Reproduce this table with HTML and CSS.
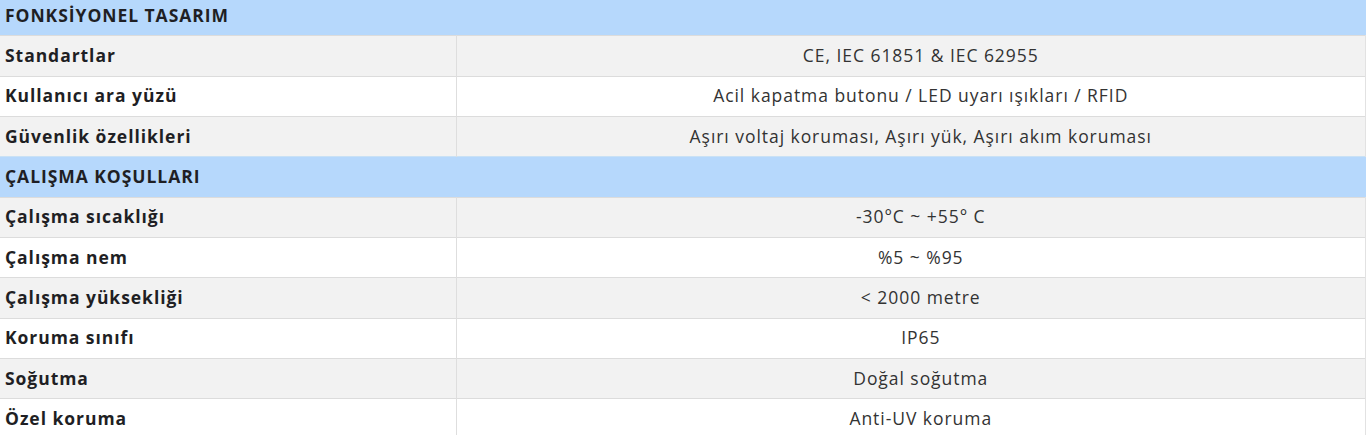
FILE: index.html
```html
<!DOCTYPE html>
<html lang="tr">
<head>
<meta charset="utf-8">
<link rel="stylesheet" href="styles.css">
</head>
<body>
<table class="spec">
  <colgroup>
    <col class="col-label">
    <col class="col-value">
  </colgroup>
  <tbody>
    <tr class="section"><td colspan="2">FONKSİYONEL TASARIM</td></tr>
    <tr class="odd"><td class="label">Standartlar</td><td class="value">CE, IEC 61851 &amp; IEC 62955</td></tr>
    <tr class="even"><td class="label">Kullanıcı ara yüzü</td><td class="value">Acil kapatma butonu / LED uyarı ışıkları / RFID</td></tr>
    <tr class="odd"><td class="label">Güvenlik özellikleri</td><td class="value">Aşırı voltaj koruması, Aşırı yük, Aşırı akım koruması</td></tr>
    <tr class="section"><td colspan="2">ÇALIŞMA KOŞULLARI</td></tr>
    <tr class="odd"><td class="label">Çalışma sıcaklığı</td><td class="value">-30°C ~ +55° C</td></tr>
    <tr class="even"><td class="label">Çalışma nem</td><td class="value">%5 ~ %95</td></tr>
    <tr class="odd"><td class="label">Çalışma yüksekliği</td><td class="value">&lt; 2000 metre</td></tr>
    <tr class="even"><td class="label">Koruma sınıfı</td><td class="value">IP65</td></tr>
    <tr class="odd"><td class="label">Soğutma</td><td class="value">Doğal soğutma</td></tr>
    <tr class="even"><td class="label">Özel koruma</td><td class="value">Anti-UV koruma</td></tr>
  </tbody>
</table>
</body>
</html>
```
FILE: styles.css
```css
html, body {
  margin: 0;
  padding: 0;
  background: #ffffff;
}
body {
  font-family: "Open Sans", "Liberation Sans", sans-serif;
  color: #222222;
  overflow: hidden;
}
.spec {
  width: 1366px;
  margin-top: -5px;
  border-collapse: collapse;
  table-layout: fixed;
}
.col-label {
  width: 456px;
}
.spec td {
  box-sizing: border-box;
  height: 40.33px;
  padding: 0 5px 2px;
  border-top: 1px solid #dcdcdc;
  font-size: 17.5px;
  line-height: 20px;
  letter-spacing: 0.95px;
  vertical-align: middle;
}
.spec .label {
  font-weight: 700;
  color: #1f1f24;
  border-right: 1px solid #dedede;
}
.spec .value {
  text-align: center;
  padding-left: 25px;
  color: #333333;
  border-right: 1px solid #e2e2e2;
}
.spec .section td {
  background: #b6d8fc;
  font-weight: 700;
  color: #1f1f24;
  border-top: 1px solid #c9e1f5;
}
.spec .odd td {
  background: #f2f2f2;
}
.spec .even td {
  background: #ffffff;
}
```
